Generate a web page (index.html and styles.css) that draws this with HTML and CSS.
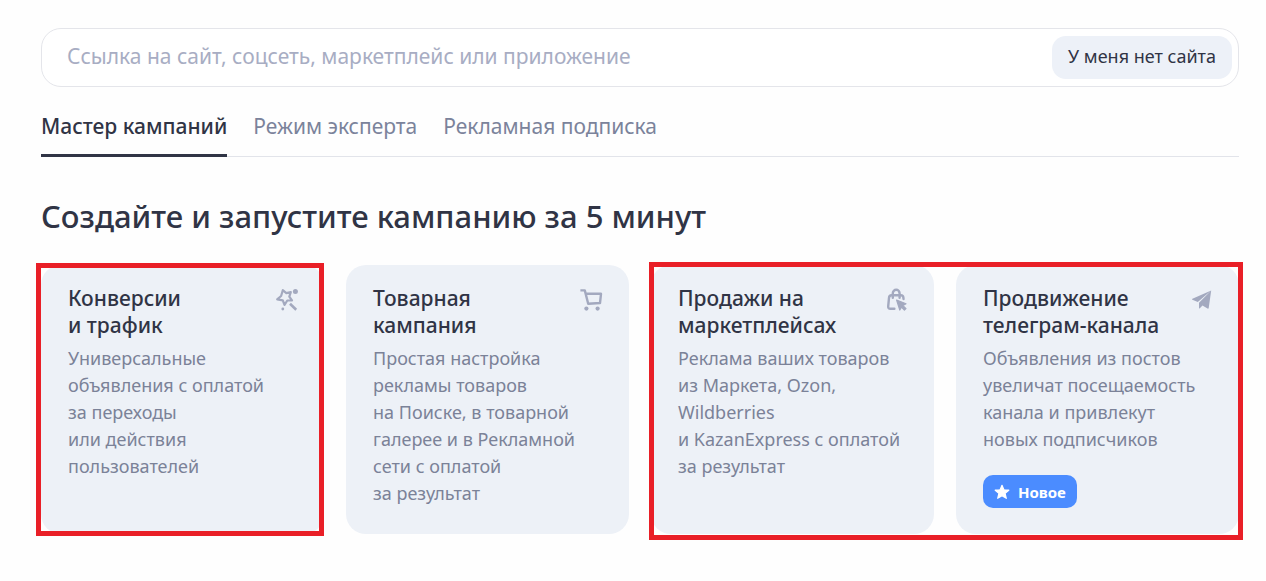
FILE: index.html
```html
<!DOCTYPE html>
<html lang="ru">
<head>
<meta charset="utf-8">
<meta name="viewport" content="width=device-width, initial-scale=1">
<title>Создание кампании</title>
<link rel="stylesheet" href="styles.css">
</head>
<body>
<main class="page">
  <form class="site-form">
    <input class="site-input" type="text" aria-label="Ссылка на рекламируемую страницу" placeholder="Ссылка на сайт, соцсеть, маркетплейс или приложение">
    <button class="no-site" type="button">У меня нет сайта</button>
  </form>
  <nav class="tabs">
    <a class="tab tab-active" href="#master" aria-current="page">Мастер кампаний</a>
    <a class="tab" href="#expert">Режим эксперта</a>
    <a class="tab" href="#subscription">Рекламная подписка</a>
  </nav>
  <h1 class="title">Создайте и запустите кампанию за 5 минут</h1>
  <section class="cards">
    <a class="card card-1" href="#conversions">
      <div class="card-head">
        <h2 class="card-title">Конверсии<br>и трафик</h2>
        <svg class="icon" viewBox="0 0 24 24" fill="none" stroke="currentColor" stroke-width="2.2" stroke-linejoin="round" aria-hidden="true">
          <path d="M7.800 2.200l3.500 2.900 4.500-1-1.500 4.500 2.700 3.700-4.700.2-2.800 4.400-1.700-4.600-5.600-.9 3.900-3.400z"/>
          <path d="M15 15.800l6.200 6" stroke-width="2.600"/>
          <circle cx="20.400" cy="3.400" r="2.500" fill="currentColor" stroke="none"/>
          <circle cx="7.800" cy="21" r="1.400" fill="currentColor" stroke="none"/>
        </svg>
      </div>
      <p class="card-text">Универсальные<br>объявления с оплатой<br>за переходы<br>или действия<br>пользователей</p>
    </a>
    <a class="card card-2" href="#goods">
      <div class="card-head">
        <h2 class="card-title">Товарная<br>кампания</h2>
        <svg class="icon" viewBox="0 0 24 24" fill="none" stroke="currentColor" stroke-width="2.400" aria-hidden="true">
          <path d="M.4 2.400h4.400l3.400 13.400 11.800-.8 1-9.200H5.800" stroke-linejoin="round"/>
          <circle cx="6.400" cy="20.600" r="2.100" fill="currentColor" stroke="none"/>
          <circle cx="17.600" cy="20.600" r="2.100" fill="currentColor" stroke="none"/>
        </svg>
      </div>
      <p class="card-text">Простая настройка<br>рекламы товаров<br>на Поиске, в товарной<br>галерее и в Рекламной<br>сети с оплатой<br>за результат</p>
    </a>
    <a class="card card-3" href="#marketplaces">
      <div class="card-head">
        <h2 class="card-title">Продажи на<br>маркетплейсах</h2>
        <svg class="icon" viewBox="0 0 24 24" fill="none" stroke="currentColor" stroke-width="2.400" stroke-linejoin="round" stroke-linecap="round" aria-hidden="true">
          <path d="M9.400 20.800H5.400q-2.400 0-2.200-2.400l.8-8.600Q4.200 7.200 6.500 7.200h9.400q2.300 0 2.500 2.400l.1 1.400"/>
          <path d="M7.800 9.800V5.200a3.400 3.400 0 0 1 6.800 0v4.600"/>
          <path d="M11.600 12l9.400 3.800-3 1.800 3 3-1.600 1.400-3-2.900-1.600 2.900z" fill="currentColor" stroke-width="1.200"/>
        </svg>
      </div>
      <p class="card-text">Реклама ваших товаров<br>из Маркета, Ozon,<br>Wildberries<br>и KazanExpress с оплатой<br>за результат</p>
    </a>
    <a class="card card-4" href="#telegram">
      <div class="card-head">
        <h2 class="card-title">Продвижение<br>телеграм-канала</h2>
        <svg class="icon" viewBox="0 0 24 24" fill="currentColor" aria-hidden="true">
          <path d="M21.200 2.600L2.400 10.800q-.9.5 0 .9l5.400 2.200zM21.200 2.600L9 14.800v5.200q.1.900.8.300l2.700-2.700 5 3q1 .5 1.200-.6z"/>
        </svg>
      </div>
      <p class="card-text">Объявления из постов<br>увеличат посещаемость<br>канала и привлекут<br>новых подписчиков</p>
      <span class="badge">
        <svg class="badge-icon" viewBox="0 0 16 16" fill="currentColor" stroke="currentColor" stroke-width="1.200" stroke-linejoin="round" aria-hidden="true"><path d="M8 1.300l1.900 4.500 4.900.4-3.700 3.200 1.200 4.900L8 11.700l-4.300 2.600 1.200-4.900L1.200 6.200l4.900-.4z"/></svg>
        Новое
      </span>
    </a>
    <div class="frame frame-first"></div>
    <div class="frame frame-last"></div>
  </section>
</main>
</body>
</html>
```
FILE: styles.css
```css
* { box-sizing: border-box; }
body {
  margin: 0;
  background: #fefefe;
  color: #303445;
  font-family: "Noto Sans", "Open Sans", sans-serif;
}
.page { padding: 28px 27px 41px 41px; }
.site-form {
  display: flex;
  align-items: center;
  height: 59px;
  padding: 0 6px 0 25px;
  background: #fff;
  border: 1px solid #e4e5ea;
  border-radius: 20px;
}
.site-input {
  flex: 1;
  min-width: 0;
  padding: 0 0 4px;
  border: 0;
  outline: 0;
  background: none;
  color: inherit;
  font: 400 21px/28px "Noto Sans", "Open Sans", sans-serif;
}
.site-input::placeholder { color: #a8adc3; opacity: 1; }
.no-site {
  height: 43px;
  padding: 0 16px 3px;
  border: 0;
  border-radius: 14px;
  background: #edf1f8;
  color: #303445;
  font: 400 18px/24px "Noto Sans", "Open Sans", sans-serif;
}
.tabs {
  display: flex;
  gap: 26px;
  height: 70px;
  border-bottom: 1px solid #e2e4ea;
}
.tab {
  height: 70px;
  padding-top: 25px;
  border-bottom: 3px solid transparent;
  color: #7b839b;
  font-size: 21px;
  line-height: 28px;
  text-decoration: none;
}
.tab-active {
  border-color: #303445;
  border-radius: 2px 2px 0 0;
  color: #303445;
  font-weight: 500;
}
.title {
  margin: 36px 0 26px;
  font-size: 31px;
  font-weight: 500;
  line-height: 46px;
}
.cards {
  display: grid;
  grid-template-columns: repeat(4, 1fr);
  gap: 22px;
}
.card {
  grid-row: 1;
  min-width: 0;
  padding: 20px 25px 26px 27px;
  border-radius: 20px;
  background: #edf1f7;
  color: #303445;
  text-decoration: none;
}
.card-1 { grid-column: 1; }
.card-2 { grid-column: 2; }
.card-3 { grid-column: 3; }
.card-4 { grid-column: 4; }
.card-head { display: flex; justify-content: space-between; }
.card-title {
  margin: 0;
  font-size: 21px;
  font-weight: 500;
  line-height: 27px;
  white-space: nowrap;
}
.icon {
  flex: none;
  width: 24px;
  height: 24px;
  margin-top: 3px;
  color: #a3a9bf;
}
.card-text {
  margin: 6px 0 0;
  color: #7b8298;
  font-size: 18px;
  line-height: 27px;
  white-space: nowrap;
}
.badge {
  display: inline-flex;
  align-items: center;
  gap: 8px;
  height: 33px;
  margin-top: 22px;
  padding: 0 11px;
  border-radius: 10px;
  background: #4b8cff;
  color: #fff;
  font-size: 15px;
  font-weight: 700;
  line-height: 22px;
}
.badge-icon { width: 16px; height: 16px; }
.frame {
  grid-row: 1;
  z-index: 1;
  border: 5px solid #e91f27;
  pointer-events: none;
}
.frame-first { grid-column: 1; margin: -2px 0 -2px -5px; }
.frame-last { grid-column: 3 / 5; margin: -3px -4px -6px -2px; }
```
